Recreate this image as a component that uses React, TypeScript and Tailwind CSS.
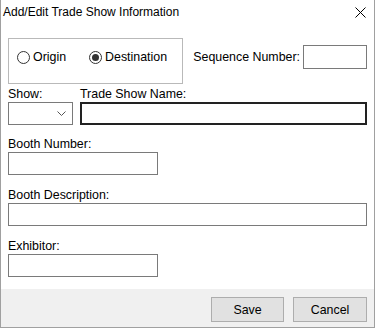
import React from "react";

function Radio({ checked, label }: { checked?: boolean; label: string }) {
  return (
    <div className="flex items-center">
      <span className="w-[13px] h-[13px] rounded-full border border-[#333333] bg-white flex items-center justify-center">
        {checked && <span className="w-[7px] h-[7px] rounded-full bg-[#333333]" />}
      </span>
      <span className="ml-[3px] leading-[14px]">{label}</span>
    </div>
  );
}

function Field({ label, className, dark }: { label: string; className?: string; dark?: boolean }) {
  return (
    <div className={className}>
      <div className="leading-[14px] h-[14px] mb-[1px]">{label}</div>
      <div
        className={
          dark
            ? "h-[23px] border-2 border-[#222222] bg-white"
            : "h-[23px] border border-[#7a7a7a] bg-white"
        }
      />
    </div>
  );
}

export default function App() {
  return (
    <div className="w-[375px] h-[328px] bg-white border-x border-b border-[#a0a0a0] flex flex-col text-[12.4px] text-black font-['Liberation_Sans',Arial,sans-serif]">
      <div className="h-[30px] flex items-start justify-between pl-[2px] pr-[8px] pt-[4px] shrink-0">
        <span className="leading-[16px] text-[12px]">Add/Edit Trade Show Information</span>
        <svg width="11" height="11" viewBox="0 0 11 11" className="mt-[3px]">
          <path d="M0.5 0.5 L10.5 10.5 M10.5 0.5 L0.5 10.5" stroke="#000" strokeWidth="1" />
        </svg>
      </div>

      <div className="px-[7px] flex flex-col">
        <div className="mt-[8px] flex items-start">
          <div className="w-[175px] h-[46px] border border-[#b9b9b9] pl-[8px] pt-[11px] flex items-start">
            <Radio label="Origin" />
            <div className="ml-[23px]">
              <Radio checked label="Destination" />
            </div>
          </div>
          <div className="ml-auto mt-[7px] flex items-center">
            <span className="leading-[14px]">Sequence Number:</span>
            <div className="ml-[3px] w-[64px] h-[24px] border border-[#7a7a7a] bg-white" />
          </div>
        </div>

        <div className="mt-[3px] flex">
          <div className="w-[65px]">
            <div className="leading-[14px] h-[14px] mb-[1px]">Show:</div>
            <div className="h-[23px] border border-[#7a7a7a] bg-white flex items-center justify-end pr-[6px]">
              <svg width="9" height="5" viewBox="0 0 9 5">
                <path d="M0.5 0.5 L4.5 4.5 L8.5 0.5" stroke="#555" strokeWidth="1" fill="none" />
              </svg>
            </div>
          </div>
          <Field label="Trade Show Name:" className="ml-[7px] flex-1" dark />
        </div>

        <Field label="Booth Number:" className="mt-[12px] w-[150px]" />
        <Field label="Booth Description:" className="mt-[13px]" />
        <Field label="Exhibitor:" className="mt-[13px] w-[150px]" />
      </div>

      <div className="mt-auto h-[38px] bg-[#f0f0f0] flex items-start justify-end pt-[8px] pr-[7px] gap-[9px]">
        <button className="w-[73px] h-[25px] bg-[#e1e1e1] border border-[#adadad] text-[12.4px] leading-[14px]">Save</button>
        <button className="w-[74px] h-[25px] bg-[#e1e1e1] border border-[#adadad] text-[12.4px] leading-[14px]">Cancel</button>
      </div>
    </div>
  );
}
